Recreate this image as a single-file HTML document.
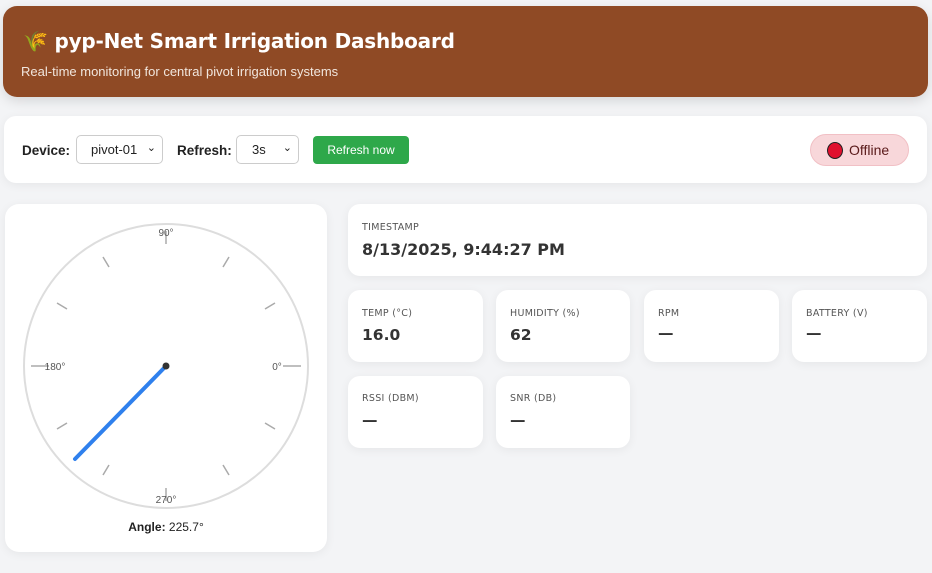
<!DOCTYPE html>
<html><head><meta charset="utf-8"><style>
*{box-sizing:border-box;margin:0;padding:0}
body{width:932px;height:573px;background:#f3f4f6;font-family:"Liberation Sans","DejaVu Sans",sans-serif;position:relative;overflow:hidden;color:#222}
.hdr{position:absolute;left:3px;top:6px;width:925px;height:91px;background:#8f4a25;border-radius:14px;box-shadow:0 4px 12px rgba(0,0,0,.12);color:#fff}
.hdr h1{position:absolute;left:20px;top:23px;font-size:20px;font-weight:bold;font-family:"DejaVu Sans",sans-serif;letter-spacing:-0.2px}
.hdr p{position:absolute;left:18px;top:58px;font-size:13px;color:#f1e6dd}
.card{position:absolute;background:#fff;border-radius:12px;box-shadow:0 2px 10px rgba(0,0,0,.06)}
.ctl{left:4px;top:116px;width:923px;height:67px}
.lbl{position:absolute;top:27px;font-size:13.5px;font-weight:bold;color:#222}
.sel{position:absolute;top:19px;height:29px;border:1px solid #ccc;border-radius:5px;font-size:13px;padding:6px 0 0 0}
.btn{position:absolute;left:309px;top:20px;width:96px;height:28px;background:#2ea84a;border-radius:4px;color:#fff;font-size:12px;text-align:center;line-height:28px}
.off{position:absolute;left:806px;top:18px;width:99px;height:32px;border-radius:16px;background:#f8d7da;border:1px solid #f1c0c5;font-size:14px;color:#5a1a1a;line-height:30px;padding-left:38px}
.dot{position:absolute;left:16px;top:7px;width:16px;height:17px;border-radius:50%;background:#e0102e;border:1.5px solid #222}
.m .t{position:absolute;left:14px;font-size:9.5px;color:#555;letter-spacing:.3px;font-family:"DejaVu Sans",sans-serif}
.m .v{position:absolute;left:14px;font-size:15.5px;font-weight:bold;color:#333;font-family:"DejaVu Sans",sans-serif}
</style></head><body>
<div class="hdr"><h1>🌾 pyp-Net Smart Irrigation Dashboard</h1><p>Real-time monitoring for central pivot irrigation systems</p></div>
<div class="card ctl">
<div class="lbl" style="left:18px">Device:</div>
<div class="sel" style="left:72px;width:87px;padding-left:14px">pivot-01 <span style="position:absolute;right:6px;top:5px;font-size:11px">⌄</span></div>
<div class="lbl" style="left:173px">Refresh:</div>
<div class="sel" style="left:232px;width:63px;padding-left:15px">3s<span style="position:absolute;right:6px;top:5px;font-size:11px">⌄</span></div>
<div class="btn">Refresh now</div>
<div class="off"><div class="dot"></div>Offline</div>
</div>
<div class="card" style="left:5px;top:204px;width:322px;height:348px;border-radius:14px">
<svg width="322" height="348" style="position:absolute;left:0;top:0">
<g transform="translate(161,162)">
<circle r="142" fill="none" stroke="#ddd" stroke-width="2"/>
<g stroke="#aaa" stroke-width="1.5">
<line x1="117" y1="0" x2="135" y2="0"/><line x1="-117" y1="0" x2="-135" y2="0"/>
<line x1="0" y1="-122" x2="0" y2="-135"/><line x1="0" y1="122" x2="0" y2="135"/>
<line x1="109" y1="-63" x2="99" y2="-57"/><line x1="63" y1="-109" x2="57" y2="-99"/>
<line x1="-109" y1="-63" x2="-99" y2="-57"/><line x1="-63" y1="-109" x2="-57" y2="-99"/>
<line x1="109" y1="63" x2="99" y2="57"/><line x1="63" y1="109" x2="57" y2="99"/>
<line x1="-109" y1="63" x2="-99" y2="57"/><line x1="-63" y1="109" x2="-57" y2="99"/>
</g>
<g font-size="10" fill="#555" font-family="Liberation Sans,sans-serif" text-anchor="middle">
<text x="0" y="-130">90°</text><text x="0" y="137">270°</text>
<text x="-111" y="4">180°</text><text x="111" y="4">0°</text>
</g>
<line x1="0" y1="0" x2="-91" y2="93" stroke="#2f80ed" stroke-width="4" stroke-linecap="round"/>
<circle r="3.5" fill="#333"/>
</g>
<text x="161" y="327" text-anchor="middle" font-size="12" fill="#222" font-family="Liberation Sans,sans-serif"><tspan font-weight="bold">Angle:</tspan> 225.7°</text>
</svg>
</div>
<div class="card m" style="left:348px;top:204px;width:579px;height:72px"><div class="t" style="top:18px">TIMESTAMP</div><div class="v" style="top:36px;font-size:16px">8/13/2025, 9:44:27 PM</div></div>
<div class="card m" style="left:348px;top:290px;width:135px;height:72px"><div class="t" style="top:18px">TEMP (°C)</div><div class="v" style="top:36px">16.0</div></div>
<div class="card m" style="left:496px;top:290px;width:134px;height:72px"><div class="t" style="top:18px">HUMIDITY (%)</div><div class="v" style="top:36px">62</div></div>
<div class="card m" style="left:644px;top:290px;width:135px;height:72px"><div class="t" style="top:18px">RPM</div><div class="v" style="top:34px">—</div></div>
<div class="card m" style="left:792px;top:290px;width:135px;height:72px"><div class="t" style="top:18px">BATTERY (V)</div><div class="v" style="top:34px">—</div></div>
<div class="card m" style="left:348px;top:376px;width:135px;height:72px"><div class="t" style="top:17px">RSSI (DBM)</div><div class="v" style="top:35px">—</div></div>
<div class="card m" style="left:496px;top:376px;width:134px;height:72px"><div class="t" style="top:17px">SNR (DB)</div><div class="v" style="top:35px">—</div></div>
</body></html>
